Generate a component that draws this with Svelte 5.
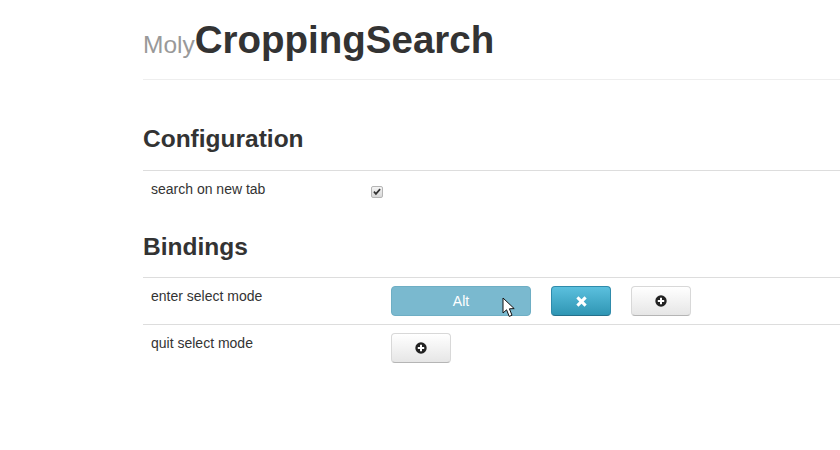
<script>
  const bindings = [
    { label: "enter select mode", keys: ["Alt"] },
    { label: "quit select mode", keys: [] }
  ];
</script>

<main class="page">
  <header class="head">
    <h1><small>Moly</small>CroppingSearch</h1>
  </header>

  <h2 class="first">Configuration</h2>
  <div class="row config">
    <div class="name">search on new tab</div>
    <div class="value check-cell">
      <span class="check">
        <svg viewBox="0 0 12 12" width="10" height="10"><path d="M1.6 6.4 L3 4.9 L4.7 6.5 L9 1.8 L10.5 3.2 L4.7 9.8 Z" fill="#333" /></svg>
      </span>
    </div>
  </div>

  <h2>Bindings</h2>
  {#each bindings as binding}
    <div class="row binding">
      <div class="name">{binding.label}</div>
      <div class="value buttons">
        {#each binding.keys as key}
          <div class="key-wrap">
            <button class="btn key">{key}</button>
            <svg class="cursor" viewBox="0 0 14 21" width="14" height="21">
              <path d="M1 1 L1 16 L4.6 12.8 L7.2 19.4 L10 18.2 L7.4 11.8 L12.2 11.6 Z" fill="#fff" stroke="#111" stroke-width="1" stroke-linejoin="round" />
            </svg>
          </div>
          <button class="btn remove" aria-label="remove">
            <svg viewBox="0 0 12 12" width="13" height="13"><path d="M3.2 1.2 L6 4 L8.8 1.2 L10.8 3.2 L8 6 L10.8 8.8 L8.8 10.8 L6 8 L3.2 10.8 L1.2 8.8 L4 6 L1.2 3.2 Z" fill="#fff" /></svg>
          </button>
        {/each}
        <button class="btn add" aria-label="add">
          <svg viewBox="0 0 12 12" width="12" height="12"><circle cx="6" cy="6" r="5.7" fill="#222" /><path d="M5 2.8 H7 V5 H9.2 V7 H7 V9.2 H5 V7 H2.8 V5 H5 Z" fill="#fff" /></svg>
        </button>
      </div>
    </div>
  {/each}
</main>

<style>
  :global(body) {
    margin: 0;
    background: #fff;
    color: #333;
    font-family: "Liberation Sans", Arial, sans-serif;
    font-size: 14px;
    line-height: 20px;
    overflow: hidden;
  }

  .page {
    margin-left: 143px;
    height: 450px;
    overflow: hidden;
  }

  .head {
    height: 79px;
    border-bottom: 1px solid #eee;
  }

  h1 {
    margin: 0;
    padding-top: 20px;
    font-size: 38.5px;
    line-height: 40px;
    font-weight: bold;
    color: #333;
  }

  small {
    font-size: 24.5px;
    font-weight: normal;
    color: #999;
  }

  h2 {
    margin: 0;
    height: 61px;
    padding-top: 11px;
    font-size: 24.5px;
    line-height: 40px;
    font-weight: bold;
    color: #333;
    box-sizing: border-box;
  }

  h2.first {
    height: 90px;
    padding-top: 39px;
  }

  .row {
    display: flex;
    border-top: 1px solid #ddd;
    box-sizing: border-box;
  }

  .config {
    height: 46px;
  }

  .binding {
    height: 47px;
  }

  .name {
    width: 248px;
    padding: 8px 0 0 8px;
    box-sizing: border-box;
  }

  .check-cell {
    margin-left: -20px;
    padding-top: 15px;
  }

  .check {
    display: flex;
    align-items: center;
    justify-content: center;
    width: 10px;
    height: 10px;
    border: 1px solid #b5b5b5;
    border-radius: 2px;
    background: linear-gradient(#f4f4f4, #d8d8d8);
  }

  .buttons {
    display: flex;
    gap: 20px;
    padding-top: 8px;
  }

  .btn {
    display: flex;
    align-items: center;
    justify-content: center;
    height: 30px;
    padding: 0;
    border-radius: 4px;
    font-family: inherit;
    font-size: 14px;
  }

  .key-wrap {
    position: relative;
  }

  .key {
    width: 140px;
    color: #fff;
    border: 1px solid #6eaec4;
    background: #7ab9cf;
  }

  .cursor {
    position: absolute;
    left: 111px;
    top: 11px;
  }

  .remove {
    width: 60px;
    border: 1px solid #2f8bab;
    border-bottom-color: #24708b;
    background: linear-gradient(#5bc0de, #2f96b4);
  }

  .add {
    width: 60px;
    border: 1px solid #d8d8d8;
    border-bottom-color: #b5b5b5;
    background: linear-gradient(#fff, #e6e6e6);
  }
</style>
